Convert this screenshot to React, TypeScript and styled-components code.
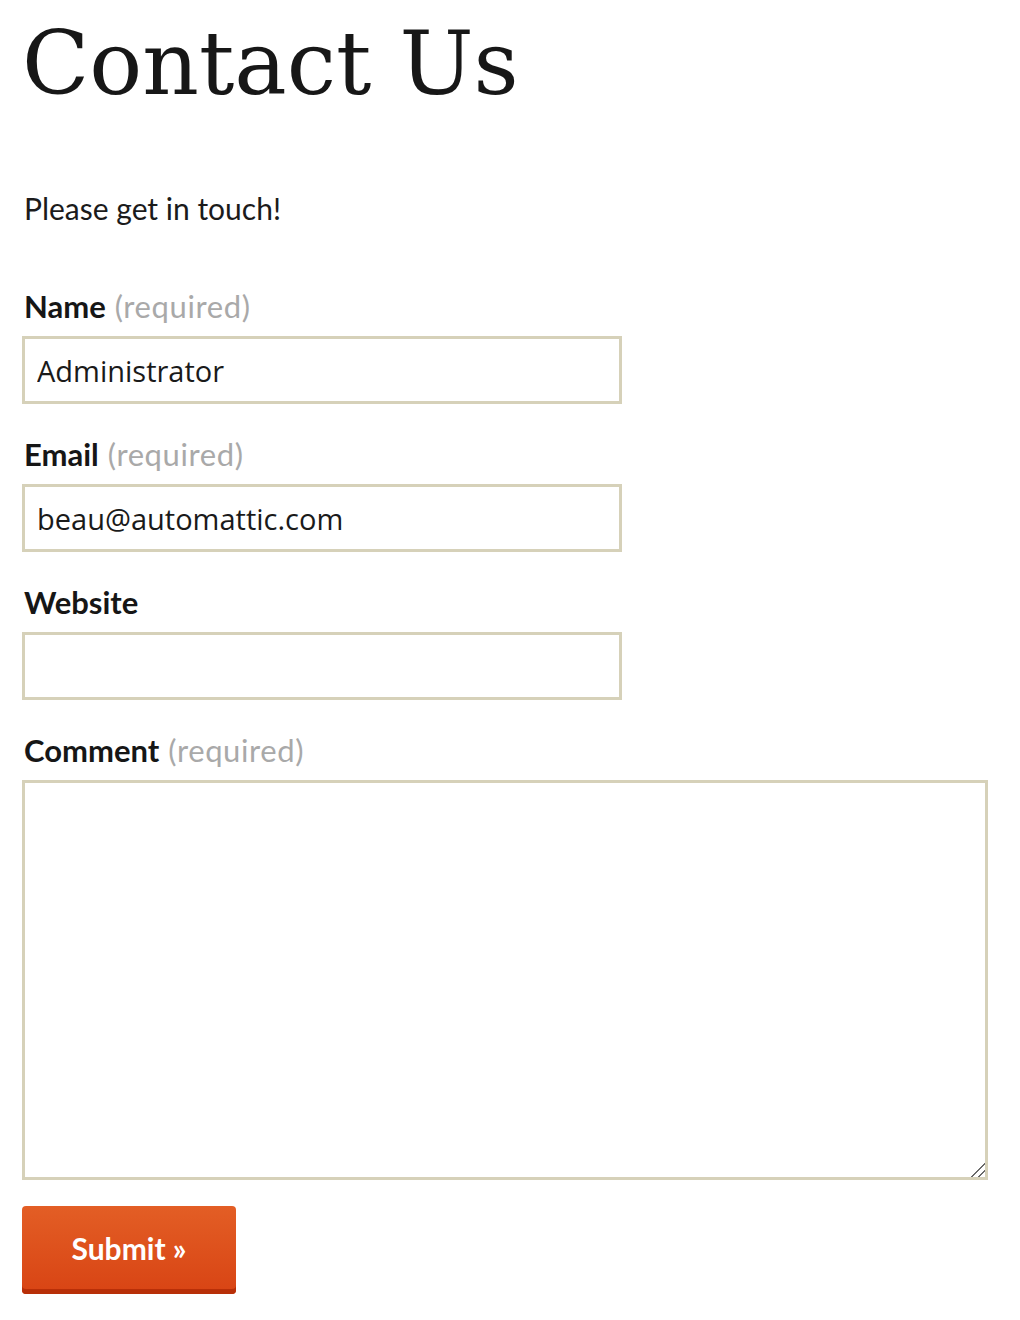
import React from "react";
import styled, { createGlobalStyle } from "styled-components";

const Global = createGlobalStyle`
  html, body { margin: 0; padding: 0; background: #ffffff; }
  body { font-family: Lato, "Liberation Sans", sans-serif; color: #1b1b1b; }
`;

const Page = styled.main`
  padding: 0 32px 0 22px;
  width: 966px;
`;

const Title = styled.h1`
  font-family: "DejaVu Serif", "Liberation Serif", serif;
  font-weight: 400;
  font-size: 88px;
  line-height: 110px;
  letter-spacing: 0;
  margin: 9px 0 0 0;
  color: #171717;
`;

const Intro = styled.p`
  font-size: 30px;
  line-height: 40px;
  margin: 69px 0 58px 2px;
  color: #1b1b1b;
`;

const Form = styled.form`
  display: flex;
  flex-direction: column;
`;

const Field = styled.div`
  display: flex;
  flex-direction: column;
  margin-bottom: 30px;
`;

const Label = styled.label`
  font-size: 31px;
  line-height: 40px;
  font-weight: 700;
  margin: 0 0 10px 2px;
  color: #161616;
`;

const Required = styled.span`
  font-weight: 400;
  color: #a9a9a9;
  margin-left: 9px;
  letter-spacing: 0.6px;
`;

const Input = styled.input`
  box-sizing: border-box;
  width: 600px;
  height: 68px;
  border: 3px solid #d6d1b9;
  padding: 0 12px;
  font-family: "Open Sans", Lato, sans-serif;
  font-size: 29px;
  color: #1a1a1a;
  background: #fff;
  outline: none;
`;

const TextArea = styled.textarea`
  box-sizing: border-box;
  width: 966px;
  height: 400px;
  border: 3px solid #d6d1b9;
  padding: 12px;
  font-family: "Open Sans", Lato, sans-serif;
  font-size: 29px;
  background: #fff;
  resize: both;
  outline: none;

  &::-webkit-resizer {
    width: 18px;
    height: 18px;
    background: linear-gradient(
      135deg,
      transparent 0 52%,
      #6a6a6a 52% 60%,
      transparent 60% 74%,
      #6a6a6a 74% 82%,
      transparent 82%
    );
  }
`;

const Submit = styled.button`
  align-self: flex-start;
  width: 214px;
  height: 88px;
  margin-top: -4px;
  border: none;
  border-radius: 4px;
  background: linear-gradient(#e35e25, #d84414);
  box-shadow: inset 0 -5px 0 #b82f08;
  color: #ffffff;
  font-family: Lato, sans-serif;
  font-weight: 700;
  font-size: 30px;
  padding: 0 0 4px 0;
  cursor: pointer;
`;

export default function App() {
  return (
    <>
      <Global />
      <Page>
        <Title>Contact Us</Title>
        <Intro>Please get in touch!</Intro>
        <Form onSubmit={(e) => e.preventDefault()}>
          <Field>
            <Label htmlFor="name">
              Name<Required>(required)</Required>
            </Label>
            <Input id="name" type="text" defaultValue="Administrator" />
          </Field>
          <Field>
            <Label htmlFor="email">
              Email<Required>(required)</Required>
            </Label>
            <Input id="email" type="email" defaultValue="beau@automattic.com" />
          </Field>
          <Field>
            <Label htmlFor="website">Website</Label>
            <Input id="website" type="text" defaultValue="" />
          </Field>
          <Field>
            <Label htmlFor="comment">
              Comment<Required>(required)</Required>
            </Label>
            <TextArea id="comment" />
          </Field>
          <Submit type="submit">Submit »</Submit>
        </Form>
      </Page>
    </>
  );
}
